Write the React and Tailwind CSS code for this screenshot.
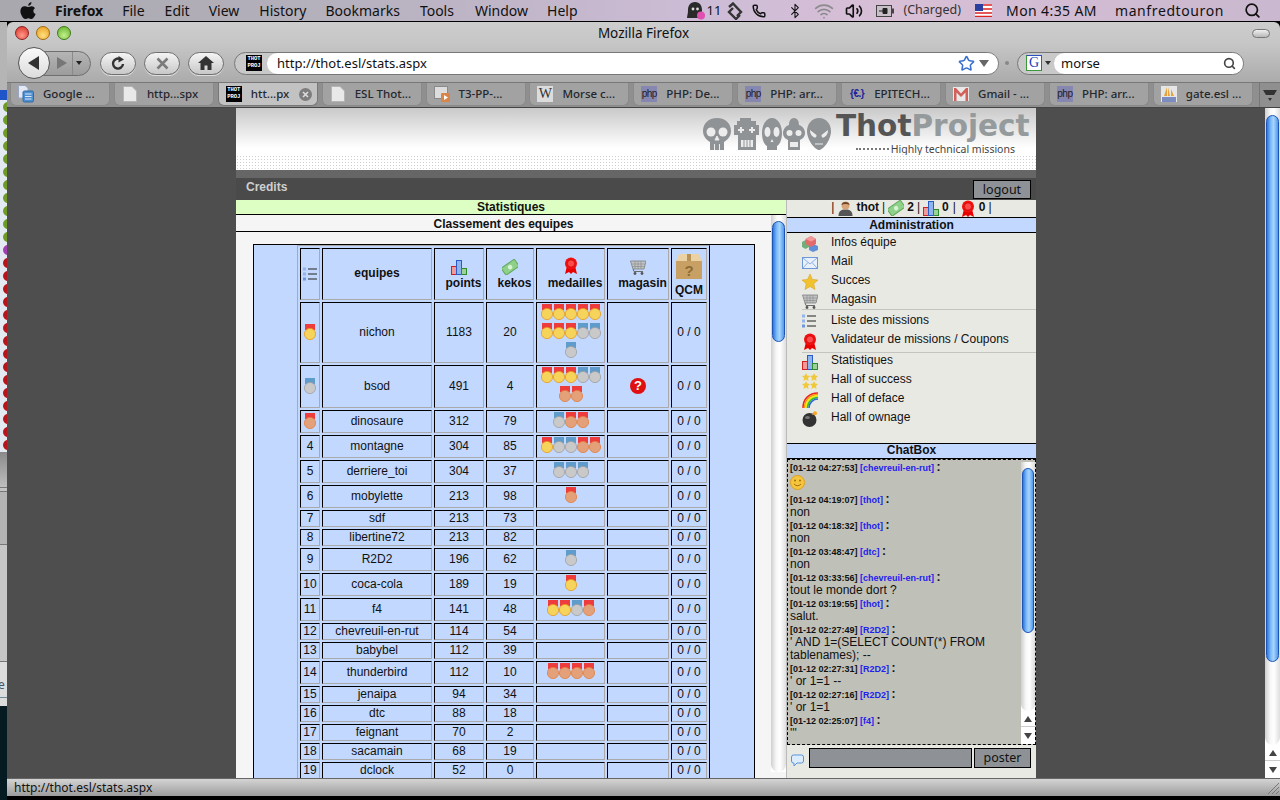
import React from 'react'
import { Phone, Bluetooth, Wifi, Volume2, Search, Star } from 'lucide-react'

const MENUS = [['File', 'ml-[19px]'], ['Edit', 'ml-[20px]'], ['View', 'ml-[19px]'], ['History', 'ml-[20px]'], ['Bookmarks', 'ml-[19px]'], ['Tools', 'ml-[20px]'], ['Window', 'ml-[21px]'], ['Help', 'ml-[19px]']]

const TABS = [
  ['docs', 'Google ...'], ['page', 'http...spx'], ['thot', 'htt...px', true], ['page', 'ESL Thot...'], ['t3', 'T3-PP-...'], ['wiki', 'Morse c...'],
  ['php', 'PHP: De...'], ['php', 'PHP: arr...'], ['epi', 'EPITECH...'], ['gmail', 'Gmail - ...'], ['php', 'PHP: arr...'], ['pma', 'gate.esl ...'],
]

// g = or, s = argent, b = bronze
const TEAMS = [
  { rank: 'g', name: 'nichon', points: 1183, kekos: 20, medals: 'ggggggggsss', h: 'h-[61px]' },
  { rank: 's', name: 'bsod', points: 491, kekos: 4, medals: 'gggssbb', h: 'h-[43px]', shop: true },
  { rank: 'b', name: 'dinosaure', points: 312, kekos: 79, medals: 'sbb', h: 'h-[23px]' },
  { rank: '4', name: 'montagne', points: 304, kekos: 85, medals: 'gssbb', h: 'h-[23px]' },
  { rank: '5', name: 'derriere_toi', points: 304, kekos: 37, medals: 'sss', h: 'h-[23px]' },
  { rank: '6', name: 'mobylette', points: 213, kekos: 98, medals: 'b', h: 'h-[23px]' },
  { rank: '7', name: 'sdf', points: 213, kekos: 73, medals: '', h: 'h-[17px]' },
  { rank: '8', name: 'libertine72', points: 213, kekos: 82, medals: '', h: 'h-[17px]' },
  { rank: '9', name: 'R2D2', points: 196, kekos: 62, medals: 's', h: 'h-[23px]' },
  { rank: '10', name: 'coca-cola', points: 189, kekos: 19, medals: 'g', h: 'h-[23px]' },
  { rank: '11', name: 'f4', points: 141, kekos: 48, medals: 'ggsb', h: 'h-[23px]' },
  { rank: '12', name: 'chevreuil-en-rut', points: 114, kekos: 54, medals: '', h: 'h-[17px]' },
  { rank: '13', name: 'babybel', points: 112, kekos: 39, medals: '', h: 'h-[17px]' },
  { rank: '14', name: 'thunderbird', points: 112, kekos: 10, medals: 'bbbb', h: 'h-[23px]' },
  { rank: '15', name: 'jenaipa', points: 94, kekos: 34, medals: '', h: 'h-[17px]' },
  { rank: '16', name: 'dtc', points: 88, kekos: 18, medals: '', h: 'h-[17px]' },
  { rank: '17', name: 'feignant', points: 70, kekos: 2, medals: '', h: 'h-[17px]' },
  { rank: '18', name: 'sacamain', points: 68, kekos: 19, medals: '', h: 'h-[17px]' },
  { rank: '19', name: 'dclock', points: 52, kekos: 0, medals: '', h: 'h-[17px]' },
]

const CHAT = [
  ['01-12 04:27:53', 'chevreuil-en-rut', null],
  ['01-12 04:19:07', 'thot', 'non'],
  ['01-12 04:18:32', 'thot', 'non'],
  ['01-12 03:48:47', 'dtc', 'non'],
  ['01-12 03:33:56', 'chevreuil-en-rut', 'tout le monde dort ?'],
  ['01-12 03:19:55', 'thot', 'salut.'],
  ['01-12 02:27:49', 'R2D2', "' AND 1=(SELECT COUNT(*) FROM tablenames); --"],
  ['01-12 02:27:31', 'R2D2', "' or 1=1 --"],
  ['01-12 02:27:16', 'R2D2', "' or 1=1"],
  ['01-12 02:25:07', 'f4', "'''"],
]

function Medal({ type }) {
  const ribbon = type === 's' ? '#5f9ccb' : '#ee3b3b'
  const fill = { g: '#f6d45c', s: '#c9c9c9', b: '#e4a078' }[type]
  const edge = { g: '#e79a1c', s: '#a0a0a0', b: '#e2803f' }[type]
  return (
    <svg width="12" height="16" viewBox="0 0 12 16" className="block shrink-0">
      <rect x="1" y="0" width="10" height="6" fill={ribbon} />
      <circle cx="6" cy="10" r="5.6" fill={fill} stroke={edge} strokeWidth="0.8" />
    </svg>
  )
}

function ChartIcon({ size = 16 }) {
  return (
    <svg width={size} height={size} viewBox="0 0 16 16" className="block shrink-0">
      <rect x="0.5" y="7.5" width="5" height="8" fill="#f29a9a" stroke="#d02020" />
      <rect x="5.5" y="1.5" width="5" height="14" fill="#8fb4ee" stroke="#2a5cc8" />
      <rect x="10.5" y="9.5" width="5" height="6" fill="#9ad29a" stroke="#2f8a2f" />
    </svg>
  )
}

function KekosIcon() {
  return (
    <svg width="16" height="16" viewBox="0 0 16 16" className="block shrink-0">
      <g transform="rotate(-35 8 8)">
        <rect x="0" y="4" width="16" height="8.5" fill="#8fd08a" stroke="#5ea85a" />
        <circle cx="8" cy="8.2" r="2.2" fill="#d8f2d4" />
      </g>
    </svg>
  )
}

function RibbonIcon() {
  return (
    <svg width="16" height="18" viewBox="0 0 16 18" className="block shrink-0">
      <path d="M4 9 L2 17 L6 15 L8 17 L10 15 L14 17 L12 9 Z" fill="#e80000" />
      <circle cx="8" cy="6.5" r="6" fill="#f01010" />
      <circle cx="8" cy="6.5" r="3.6" fill="#ff4a4a" stroke="#c00000" strokeWidth="0.6" />
    </svg>
  )
}

function CartIcon() {
  return (
    <svg width="16" height="16" viewBox="0 0 16 16" className="block shrink-0">
      <path d="M0.5 2 H16 L14 10 H3 Z" fill="#c2c4c4" stroke="#7b7f80" strokeWidth="0.8" />
      <path d="M2 5 H15 M2.5 7.5 H14.5 M5 2 V10 M8 2 V10 M11 2 V10" stroke="#858889" strokeWidth="0.6" />
      <path d="M3 10 L4 12.5 H13" stroke="#6a6d6e" fill="none" />
      <circle cx="5" cy="14.5" r="1.4" fill="#555" />
      <circle cx="12" cy="14.5" r="1.4" fill="#555" />
    </svg>
  )
}

function ListIcon() {
  return (
    <svg width="14" height="14" viewBox="0 0 14 14" className="block shrink-0">
      <rect x="0" y="0.5" width="3" height="3" fill="#93b4ea" />
      <rect x="0" y="5.5" width="3" height="3" fill="#93b4ea" />
      <rect x="0" y="10.5" width="3" height="3" fill="#6f98e0" />
      <path d="M5 2 H14 M5 7 H14 M5 12 H14" stroke="#222" strokeWidth="1" />
    </svg>
  )
}

function BoxIcon() {
  return (
    <svg width="28" height="30" viewBox="0 0 28 30" className="block shrink-0">
      <path d="M4 2 H24 L27 9 H1 Z" fill="#ead2a4" />
      <rect x="1" y="9" width="26" height="18" fill="#c8a063" />
      <rect x="12" y="2" width="4" height="7" fill="#b99355" />
      <text x="14" y="24" textAnchor="middle" fontSize="15" fontFamily="Liberation Sans" fontWeight="700" fill="#8d6c36">?</text>
    </svg>
  )
}

function MenuIcon({ kind }) {
  if (kind === 'cubes') return (
    <svg width="16" height="16" viewBox="0 0 16 16" className="block">
      <path d="M0 6 L3.5 4 L7 6 V11 L3.5 13 L0 11 Z" fill="#6fb07a" />
      <path d="M7 10 L11 8 L16 10 V14 L11 16 L7 14 Z" fill="#5f8fd6" />
      <path d="M3.5 3 L9 0 L14 3 V8 L9 11 L3.5 8 Z" fill="#e26a6a" />
      <path d="M3.5 3 L9 5.5 L14 3 L9 0 Z" fill="#f09a9a" />
    </svg>
  )
  if (kind === 'mail') return (
    <svg width="16" height="12" viewBox="0 0 16 12" className="block mt-[2px]">
      <rect x="0.5" y="0.5" width="15" height="11" fill="#e8f0fb" stroke="#6d98d8" />
      <path d="M1 1 L8 7 L15 1 M1 11 L6 5.5 M15 11 L10 5.5" stroke="#8fb0e0" fill="none" />
    </svg>
  )
  if (kind === 'star') return (
    <svg width="16" height="16" viewBox="0 0 16 16" className="block">
      <path d="M8 0 L10.4 5.4 L16 6 L11.8 9.8 L13 15.5 L8 12.6 L3 15.5 L4.2 9.8 L0 6 L5.6 5.4 Z" fill="#f2c22e" stroke="#d49a18" strokeWidth="0.5" />
    </svg>
  )
  if (kind === 'cart') return <CartIcon />
  if (kind === 'list') return <ListIcon />
  if (kind === 'ribbon') return <RibbonIcon />
  if (kind === 'chart') return <ChartIcon />
  if (kind === 'stars') return (
    <svg width="16" height="16" viewBox="0 0 16 16" className="block">
      <g fill="#f0c93a">
        <path d="M4 0 L5.2 2.6 L8 3 L6 5 L6.5 8 L4 6.5 L1.5 8 L2 5 L0 3 L2.8 2.6 Z" />
        <path d="M12 0 L13.2 2.6 L16 3 L14 5 L14.5 8 L12 6.5 L9.5 8 L10 5 L8 3 L10.8 2.6 Z" />
        <path d="M4 8 L5.2 10.6 L8 11 L6 13 L6.5 16 L4 14.5 L1.5 16 L2 13 L0 11 L2.8 10.6 Z" />
        <path d="M12 8 L13.2 10.6 L16 11 L14 13 L14.5 16 L12 14.5 L9.5 16 L10 13 L8 11 L10.8 10.6 Z" />
      </g>
    </svg>
  )
  if (kind === 'rainbow') return (
    <svg width="16" height="16" viewBox="0 0 16 16" className="block" fill="none" strokeWidth="1.5">
      <path d="M1 16 C1 7 7 1 16 1" stroke="#e22" />
      <path d="M2.5 16 C2.5 8 8 2.5 16 2.5" stroke="#f90" />
      <path d="M4 16 C4 9 9 4 16 4" stroke="#ee0" />
      <path d="M5.5 16 C5.5 10 10 5.5 16 5.5" stroke="#3b3" />
      <path d="M7 16 C7 11 11 7 16 7" stroke="#36d" />
    </svg>
  )
  return (
    <svg width="16" height="16" viewBox="0 0 16 16" className="block">
      <circle cx="7.5" cy="9" r="7" fill="#333" />
      <ellipse cx="5.5" cy="6.5" rx="2.5" ry="1.5" fill="#777" />
      <path d="M10 3.5 L13 1.5" stroke="#a86" strokeWidth="1.4" />
      <circle cx="13" cy="2.2" r="2" fill="#f6a623" />
    </svg>
  )
}

function Scrollbar({ w = 'w-[15px]', top, thumb, arrows = false, className = '' }) {
  return (
    <div className={`${w} ${className} shrink-0 flex flex-col overflow-hidden bg-white`}>
      <div className="flex-1 min-h-0 flex flex-col rounded-b-full bg-[linear-gradient(90deg,#cfcfcf,#f7f7f7_35%,#ffffff_60%,#dedede)]">
        <div className={top} />
        <div className={`${thumb} mx-[1px] rounded-full border border-[#1c54b8] bg-[linear-gradient(90deg,#2f77dc,#7fbcf8_35%,#a8d4fb_60%,#4e9aee)]`} />
      </div>
      {arrows && (
        <div className="h-[33px] shrink-0 flex flex-col bg-white">
          <div className="h-[16px] flex items-center justify-center border-b border-[#ccc]">
            <div className="w-0 h-0 border-x-[4px] border-x-transparent border-b-[6px] border-b-[#444]" />
          </div>
          <div className="flex-1 flex items-center justify-center">
            <div className="w-0 h-0 border-x-[4px] border-x-transparent border-t-[6px] border-t-[#444]" />
          </div>
        </div>
      )}
    </div>
  )
}

function Favicon({ kind }) {
  if (kind === 'thot') return (
    <div className="w-[16px] h-[16px] shrink-0 bg-black text-white text-[5.5px] leading-[7px] font-bold text-center font-['Liberation_Mono',monospace] tracking-[0px]">THOT<br />PROJ</div>
  )
  if (kind === 'page') return (
    <svg width="14" height="16" viewBox="0 0 14 16" className="shrink-0 ml-[1px] mr-[1px]">
      <path d="M0.5 0.5 H9 L13.5 5 V15.5 H0.5 Z" fill="#e9e9e9" stroke="#b5b5b5" />
    </svg>
  )
  if (kind === 'docs') return (
    <svg width="16" height="18" viewBox="0 0 16 18" className="shrink-0">
      <path d="M0.5 0.5 H7 L10 3 V13 H0.5 Z" fill="#e4e8f2" stroke="#9aa6c4" />
      <rect x="5" y="6" width="10.5" height="11" rx="1.5" fill="#4f8fd0" stroke="#2e6aa8" />
      <path d="M7 9 H13.5 M7 11.5 H13.5 M7 14 H13.5" stroke="#dbe9f7" />
    </svg>
  )
  if (kind === 't3') return (
    <svg width="16" height="16" viewBox="0 0 16 16" className="shrink-0">
      <rect x="0.5" y="0.5" width="13" height="12" fill="#ddd" stroke="#8a8a8a" />
      <rect x="7" y="7" width="9" height="9" rx="1" fill="#d9854a" />
      <path d="M10 9 L14 11.5 L10 14 Z" fill="#fff" />
    </svg>
  )
  if (kind === 'wiki') return (
    <div className="w-[16px] h-[16px] shrink-0 bg-[#dcdcdc] text-[#333] text-[14px] leading-[16px] text-center font-['Liberation_Serif',serif]">W</div>
  )
  if (kind === 'php') return (
    <div className="w-[16px] h-[16px] shrink-0 bg-[#8587b0] text-[#1d1d2a] text-[10px] leading-[16px] text-center font-['Liberation_Sans',sans-serif] tracking-[-0.5px]">php</div>
  )
  if (kind === 'epi') return (
    <div className="w-[16px] h-[16px] shrink-0 text-[#23239a] text-[10px] leading-[16px] font-bold text-center font-['Liberation_Sans',sans-serif] tracking-[-0.5px]">{'{€.}'}</div>
  )
  if (kind === 'gmail') return (
    <svg width="16" height="14" viewBox="0 0 16 14" className="shrink-0">
      <rect width="16" height="14" fill="#e8e8e8" />
      <path d="M1 14 V1 H3 L8 6.5 L13 1 H15 V14 H12.5 V5.5 L8 10 L3.5 5.5 V14 Z" fill="#d2605a" />
    </svg>
  )
  return (
    <svg width="16" height="16" viewBox="0 0 16 16" className="shrink-0">
      <rect width="16" height="16" fill="#e6e6e6" />
      <path d="M3 10 L6 1 V10 Z M7 10 V1 L9 10 Z M10 10 V3 L13 10 Z" fill="#e5a23a" />
      <rect x="1" y="11" width="14" height="5" fill="#7a8cc0" />
    </svg>
  )
}

function Skulls() {
  const f = '#8f9396'
  const h = '#ececec'
  return (
    <svg width="130" height="34" viewBox="0 0 130 34" className="block shrink-0">
      <path d="M15 1 C6 1 1 7 1 14 C1 20 5 23 8 25 V33 H22 V25 C25 23 29 20 29 14 C29 7 24 1 15 1 Z" fill={f} />
      <circle cx="9" cy="15" r="4.5" fill={h} /><circle cx="21" cy="15" r="4.5" fill={h} />
      <path d="M15 19 L13 23 H17 Z M12.5 27 V33 M17.5 27 V33" fill={h} stroke={h} />
      <path d="M38 1 H49 V4 H54 V8 H57 V18 H54 V33 H36 V18 H32 V8 H35 V4 H38 Z" fill={f} />
      <path d="M39 10 V16 M36 13 H42 M50 10 V16 M47 13 H53" stroke={h} strokeWidth="2" />
      <rect x="39" y="23" width="12" height="7" fill={h} /><path d="M42 23 V30 M45 23 V30 M48 23 V30" stroke={f} />
      <path d="M70 1 C64 1 60 8 60 16 C60 24 63 28 65 29 V33 H75 V29 C77 28 80 24 80 16 C80 8 76 1 70 1 Z" fill={f} />
      <ellipse cx="65.5" cy="15" rx="3" ry="5" fill={h} /><ellipse cx="74.5" cy="15" rx="3" ry="5" fill={h} />
      <path d="M70 22 L68.5 25 H71.5 Z" fill={h} />
      <path d="M92 1 C88 1 87 5 87 8 C83 9 81 13 81 16 C81 20 84 22 86 23 V33 H98 V23 C100 22 103 20 103 16 C103 13 101 9 97 8 C97 5 96 1 92 1 Z" fill={f} />
      <circle cx="87.5" cy="16" r="3" fill={h} /><circle cx="96.5" cy="16" r="3" fill={h} />
      <path d="M88 25 H96 V30 H88 Z" fill={h} />
      <path d="M117 1 C110 1 105 7 105 14 C105 23 113 33 117 33 C121 33 129 23 129 14 C129 7 124 1 117 1 Z" fill={f} />
      <path d="M108 13 L114.5 18 C114.5 21 113 21 111.5 20 C109 18.5 108 16 108 13 Z M126 13 L119.5 18 C119.5 21 121 21 122.5 20 C125 18.5 126 16 126 13 Z" fill={h} />
      <path d="M113 27 H121" stroke={h} />
    </svg>
  )
}

function MenuBar() {
  return (
    <div className="h-[22px] shrink-0 flex items-center border-b border-black bg-[linear-gradient(90deg,#a9a8ae,#b4b0bc_25%,#cdbcd6_55%,#d8bfd6_70%,#c9b8cf)] text-[14px] text-[#111] font-['Noto_Sans',sans-serif]">
      <svg width="16" height="18" viewBox="0 0 16 18" className="ml-[20px] mr-[19px] shrink-0">
        <path d="M11.5 0 C11.6 2 10 3.8 8.2 3.8 C8 2 9.6 0.3 11.5 0 Z M8 5 C9 5 10 4.2 11.6 4.2 C13 4.2 14.3 5 15 6.2 C12.6 7.6 13 11 15.6 12 C14.8 14.2 13.2 17 11.6 17 C10.4 17 10 16.2 8.4 16.2 C6.8 16.2 6.2 17 5.2 17 C3.2 17 0.4 12.6 0.4 9 C0.4 6 2.4 4.3 4.4 4.3 C5.8 4.3 7 5 8 5 Z" fill="#111" />
      </svg>
      <span className="font-bold">Firefox</span>
      {MENUS.map(([m, ml]) => <span key={m} className={ml}>{m}</span>)}
      <div className="ml-auto flex items-center h-full">
        <svg width="20" height="19" viewBox="0 0 20 19" className="shrink-0">
          <path d="M9 1 C4 1 2 5 2 9 C2 13 1 15 1 17 H15 C15 14 16 12 16 9 C16 5 14 1 9 1 Z" fill="#2a2a2a" />
          <circle cx="7" cy="8" r="1.4" fill="#ddd" /><circle cx="11.5" cy="8" r="1.4" fill="#ddd" />
          <circle cx="15" cy="14.5" r="4" fill="#e050b0" />
        </svg>
        <span className="text-[13px] ml-[1px]">11</span>
        <svg width="18" height="18" viewBox="0 0 18 18" className="ml-[5px] shrink-0" fill="none" stroke="#333" strokeWidth="2.4">
          <path d="M3 5 L7 1.5 L15 10 L11 14" /><path d="M7 6 L3 10 L10 17 L14 13" />
        </svg>
        <Phone size={14} className="ml-[8px] shrink-0" strokeWidth={2.5} />
        <Bluetooth size={16} className="ml-[21px] shrink-0" strokeWidth={1.6} />
        <Wifi size={20} className="ml-[11px] shrink-0 text-[#8d8a90]" strokeWidth={2} />
        <Volume2 size={18} className="ml-[11px] shrink-0" strokeWidth={2.2} />
        <svg width="18" height="12" viewBox="0 0 18 12" className="ml-[13px] shrink-0">
          <rect x="0.5" y="0.5" width="15" height="11" fill="#c8bfc9" stroke="#444" />
          <rect x="16" y="3.5" width="2" height="5" fill="#444" />
          <path d="M3 6 H7 M7 3.5 H11 V8.5 H7 Z" fill="#222" stroke="#222" />
        </svg>
        <span className="ml-[9px] text-[12.5px] text-[#333]">(Charged)</span>
        <svg width="17" height="13" viewBox="0 0 17 13" className="ml-[14px] shrink-0">
          <rect width="17" height="13" fill="#fff" />
          <path d="M0 1 H17 M0 5 H17 M0 9 H17 M0 12.5 H17" stroke="#d22" strokeWidth="1.4" />
          <rect width="8" height="7" fill="#2b3fa0" />
        </svg>
        <span className="ml-[14px] tracking-[0.4px]">Mon 4:35 AM</span>
        <span className="ml-[18px] tracking-[0.6px]">manfredtouron</span>
        <Search size={17} className="ml-[20px] mr-[19px] shrink-0" strokeWidth={2.4} />
      </div>
    </div>
  )
}

function ToolButton({ children }) {
  return (
    <div className="w-[36px] h-[23px] shrink-0 flex items-center justify-center rounded-full border border-[#6f6f6f] bg-[linear-gradient(180deg,#f4f4f4,#c8c8c8)] shadow-[0_1px_0_#ddd]">
      {children}
    </div>
  )
}

function Toolbar() {
  return (
    <div className="h-[38px] shrink-0 flex items-center pl-[11px] bg-[linear-gradient(180deg,#c6c6c6,#ababab)]">
      <div className="w-[32px] h-[32px] shrink-0 z-10 flex items-center justify-center rounded-full border border-[#555] bg-[linear-gradient(180deg,#fafafa,#dcdcdc)]">
        <div className="w-0 h-0 border-y-[7px] border-y-transparent border-r-[11px] border-r-[#333] mr-[2px]" />
      </div>
      <div className="w-[50px] h-[25px] shrink-0 -ml-[9px] flex items-center rounded-r-full border border-[#6f6f6f] bg-[linear-gradient(180deg,#b5b5b5,#9c9c9c)] pl-[15px]">
        <div className="w-0 h-0 border-y-[6px] border-y-transparent border-l-[10px] border-l-[#777]" />
        <div className="ml-[5px] h-full w-px bg-[#8a8a8a]" />
        <div className="ml-[3px] w-0 h-0 border-x-[3px] border-x-transparent border-t-[4px] border-t-[#222]" />
      </div>
      <div className="ml-[9px]"><ToolButton>
        <svg width="15" height="15" viewBox="0 0 15 15" fill="none"><path d="M12 8 A5 5 0 1 1 9 3" stroke="#333" strokeWidth="2.4" /><path d="M7.5 0 L13 3.5 L7.5 6.5 Z" fill="#333" /></svg>
      </ToolButton></div>
      <div className="ml-[8px]"><ToolButton>
        <svg width="13" height="13" viewBox="0 0 13 13"><path d="M1.5 1.5 L11.5 11.5 M11.5 1.5 L1.5 11.5" stroke="#7b7b7b" strokeWidth="2.6" /></svg>
      </ToolButton></div>
      <div className="ml-[8px]"><ToolButton>
        <svg width="16" height="14" viewBox="0 0 16 14"><path d="M8 0 L16 7 H13.5 V14 H9.5 V9.5 H6.5 V14 H2.5 V7 H0 Z" fill="#333" /></svg>
      </ToolButton></div>
      <div className="ml-[10px] w-[765px] h-[23px] shrink-0 flex items-center rounded-full border border-[#777] bg-[#c9c9c9] overflow-hidden">
        <div className="w-[32px] h-full shrink-0 flex items-center justify-end pr-[5px]"><Favicon kind="thot" /></div>
        <div className="flex-1 h-full flex items-center rounded-l-full bg-white pl-[10px] text-[13px] text-[#111]">
          <span className="pt-[1px]">http://thot.esl/stats.aspx</span>
          <Star size={17} className="ml-auto text-[#3a6fd0]" strokeWidth={2.2} />
          <div className="ml-[4px] mr-[9px] w-0 h-0 border-x-[5px] border-x-transparent border-t-[7px] border-t-[#666]" />
        </div>
      </div>
      <div className="ml-[6px] w-[4px] h-[4px] rounded-full bg-[#888] shrink-0" />
      <div className="ml-[8px] w-[227px] h-[23px] shrink-0 flex items-center rounded-full border border-[#777] bg-[#c9c9c9] overflow-hidden">
        <div className="w-[8px] shrink-0" />
        <div className="w-[16px] h-[16px] shrink-0 bg-white border border-[#3a9a3a] border-t-[#2a4fc0] border-r-[#c03030] text-[#1c3fb8] text-[14px] leading-[14px] text-center font-['Liberation_Serif',serif]">G</div>
        <div className="ml-[3px] w-0 h-0 shrink-0 border-x-[3px] border-x-transparent border-t-[4px] border-t-[#333]" />
        <div className="ml-[3px] flex-1 h-full flex items-center rounded-l-full bg-white pl-[7px] text-[13px] text-[#111]">
          <span className="pt-[1px]">morse</span>
          <Search size={13} className="ml-auto mr-[7px] text-[#444]" strokeWidth={3} />
        </div>
      </div>
    </div>
  )
}

function Tabs() {
  return (
    <div className="h-[26px] shrink-0 flex items-start pl-[3px] gap-[3.9px] border-t border-[#777] border-b border-b-[#444] bg-[#8f8f8f]">
      {TABS.map(([icon, label, active], i) => (
        <div key={i} className={`w-[100px] h-[23px] shrink-0 flex items-center pl-[7px] rounded-b-[6px] border-b border-x ${active ? 'bg-[#c2c2c2] border-[#777]' : 'bg-[#a2a2a2] border-[#8a8a8a]'}`}>
          <Favicon kind={icon} />
          <span className="ml-[9px] text-[11.5px] font-medium text-[#24272e] whitespace-nowrap">{label}</span>
          {active && (
            <div className="ml-auto mr-[5px] w-[13px] h-[13px] rounded-full bg-[#7d7d7d] flex items-center justify-center">
              <svg width="7" height="7" viewBox="0 0 7 7"><path d="M1 1 L6 6 M6 1 L1 6" stroke="#ddd" strokeWidth="1.6" /></svg>
            </div>
          )}
        </div>
      ))}
      <div className="ml-[2px] self-stretch w-[24px] flex items-center justify-center border-l border-[#777]">
        <svg width="16" height="13" viewBox="0 0 16 13"><path d="M1 1 H15 L12 6 H4 Z" fill="#333" /><path d="M6 9 H10 L8 12 Z" fill="#333" /></svg>
      </div>
    </div>
  )
}

function TeamTable() {
  const cell = 'p-0 pb-[1px] border border-t-black border-l-black border-r-[#aaa] border-b-[#aaa] text-center align-middle'
  const head = 'p-0 border border-t-black border-l-black border-r-[#aaa] border-b-[#aaa] text-center align-top'
  const top = 'p-0 pt-[1px] border border-t-black border-l-black border-r-[#aaa] border-b-[#aaa] text-center align-top'
  return (
    <table className="w-[413px] table-fixed border-separate border-spacing-[2px] border border-l-[#aaa] border-t-[#aaa] border-r-black border-b-black text-[12px] leading-[13px] text-[#111]">
      <thead>
        <tr className="h-[52px] font-bold">
          <th className={`${cell} w-[20px]`}><div className="flex justify-center"><ListIcon /></div></th>
          <th className={`${cell} w-[110px]`}>equipes</th>
          <th className={`${head} w-[50px]`}><div className="flex flex-col items-center gap-[2px] pt-[10px]"><ChartIcon /><span className="pl-[9px]">points</span></div></th>
          <th className={`${head} w-[48px]`}><div className="flex flex-col items-center gap-[2px] pt-[10px]"><KekosIcon /><span className="pl-[9px]">kekos</span></div></th>
          <th className={`${head} w-[69px]`}><div className="flex flex-col items-center gap-[2px] pt-[8px]"><RibbonIcon /><span className="pl-[9px]">medailles</span></div></th>
          <th className={`${head} w-[62px]`}><div className="flex flex-col items-center gap-[2px] pt-[10px]"><CartIcon /><span className="pl-[9px]">magasin</span></div></th>
          <th className={`${head} w-[36px]`}><div className="flex flex-col items-center gap-[2px] pt-[3px]"><BoxIcon /><span>QCM</span></div></th>
        </tr>
      </thead>
      <tbody>
        {TEAMS.map(t => (
          <tr key={t.name} className={t.h}>
            <td className={cell}>
              <div className="flex justify-center">
                {'gsb'.includes(t.rank) ? <Medal type={t.rank} /> : t.rank}
              </div>
            </td>
            <td className={cell}>{t.name}</td>
            <td className={cell}>{t.points}</td>
            <td className={cell}>{t.kekos}</td>
            <td className={top}>
              <div className="flex flex-wrap justify-center gap-y-[3px] w-[60px] mx-auto">
                {t.medals.split('').map((m, i) => <Medal key={i} type={m} />)}
              </div>
            </td>
            <td className={cell}>
              {t.shop && (
                <div className="mx-auto w-[16px] h-[16px] rounded-full bg-[#e01010] text-white text-[13px] leading-[16px] font-bold">?</div>
              )}
            </td>
            <td className={cell}>0 / 0</td>
          </tr>
        ))}
      </tbody>
    </table>
  )
}

function MenuItem({ kind, label }) {
  return (
    <div className="h-[19px] flex items-start pl-[15px] leading-[18px]">
      <div className="w-[16px] mt-[3px] shrink-0"><MenuIcon kind={kind} /></div>
      <span className="ml-[13px]">{label}</span>
    </div>
  )
}

function AdminMenu() {
  return (
    <div className="h-[210px] shrink-0 text-[12px] text-[#111]">
      <MenuItem kind="cubes" label="Infos équipe" />
      <MenuItem kind="mail" label="Mail" />
      <MenuItem kind="star" label="Succes" />
      <MenuItem kind="cart" label="Magasin" />
      <div className="ml-[15px] h-px bg-[#c4c4c0]" />
      <div className="pt-[1px]">
        <MenuItem kind="list" label="Liste des missions" />
        <MenuItem kind="ribbon" label="Validateur de missions / Coupons" />
      </div>
      <div className="mt-[3px] ml-[15px] h-px bg-[#c4c4c0]" />
      <div className="-mt-[2px]">
        <MenuItem kind="chart" label="Statistiques" />
        <MenuItem kind="stars" label="Hall of success" />
        <MenuItem kind="rainbow" label="Hall of deface" />
        <MenuItem kind="bomb" label="Hall of ownage" />
      </div>
    </div>
  )
}

function ChatBox() {
  return (
    <div className="h-[286px] shrink-0 flex border border-dashed border-black bg-[#bfc0b8]">
      <div className="flex-1 min-w-0 overflow-hidden pl-[2px] pr-[8px] pt-[1px] text-[12px] leading-[13px] text-[#111]">
        {CHAT.map(([stamp, nick, msg], i) => (
          <div key={i}>
            <div className="h-[13px] text-[9px] font-bold whitespace-nowrap">
              [{stamp}] <span className="text-[#2222ee]">[{nick}]</span> <span className="text-[12px]">:</span>
            </div>
            {msg ? <div>{msg}</div> : (
              <div className="h-[19px] pt-[1px]">
                <svg width="15" height="15" viewBox="0 0 15 15">
                  <circle cx="7.5" cy="7.5" r="7" fill="#f4c63c" stroke="#e0a020" />
                  <circle cx="5" cy="5.5" r="1" fill="#a86a10" /><circle cx="10" cy="5.5" r="1" fill="#a86a10" />
                  <path d="M4 9 Q7.5 12.5 11 9" stroke="#a86a10" fill="none" />
                </svg>
              </div>
            )}
          </div>
        ))}
      </div>
      <Scrollbar w="w-[14px]" top="h-[6px]" thumb="h-[165px]" arrows className="mt-[2px] mb-0" />
    </div>
  )
}

function UserIcon() {
  return (
    <svg width="15" height="16" viewBox="0 0 15 16" className="block shrink-0">
      <path d="M0.5 16 C0.5 11 3 9.5 7.5 9.5 C12 9.5 14.5 11 14.5 16 Z" fill="#555" />
      <circle cx="7.5" cy="5.5" r="4" fill="#d9a679" />
      <path d="M3.5 5 C3.5 1 11.5 1 11.5 5 C9 3.5 6 3.5 3.5 5 Z" fill="#6b4526" />
    </svg>
  )
}

function Sidebar() {
  return (
    <div className="w-[250px] shrink-0 flex flex-col border-l border-[#bbb] bg-[#e9e9e3] overflow-hidden">
      <div className="h-[17px] shrink-0 flex items-start justify-center text-[12px] leading-[14px] font-bold text-[#111]">
        <span className="font-normal mr-[4px]">|</span><UserIcon /><span className="ml-[3px]">thot</span>
        <span className="font-normal mx-[3px]">|</span><KekosIcon /><span className="ml-[3px]">2</span>
        <span className="font-normal mx-[3px]">|</span><ChartIcon /><span className="ml-[3px]">0</span>
        <span className="font-normal mx-[4px]">|</span><RibbonIcon /><span className="ml-[3px]">0</span>
        <span className="font-normal ml-[3px]">|</span>
      </div>
      <div className="h-[16px] shrink-0 border-y border-black bg-[#c2d8ff] text-center text-[12px] leading-[14px] font-bold text-[#111]">Administration</div>
      <AdminMenu />
      <div className="h-[16px] shrink-0 border-y border-black bg-[#c2d8ff] text-center text-[12px] leading-[12px] font-bold text-[#111]">ChatBox</div>
      <ChatBox />
      <div className="h-[26px] shrink-0 flex items-center pl-[4px]">
        <svg width="13" height="13" viewBox="0 0 13 13" className="shrink-0 mt-[5px]">
          <path d="M2.5 1 H10.5 Q12.5 1 12.5 3 V7 Q12.5 9 10.5 9 H6 L3 12 V9 H2.5 Q0.5 9 0.5 7 V3 Q0.5 1 2.5 1 Z" fill="#dcecff" stroke="#5b93d8" />
        </svg>
        <div className="ml-[5px] w-[163px] h-[20px] shrink-0 border border-black bg-[#8e9296]" />
        <div className="ml-[2px] w-[57px] h-[20px] shrink-0 border border-black bg-[#8e9296] text-center text-[12.5px] leading-[18px] text-[#111] font-['Noto_Sans',sans-serif]">poster</div>
      </div>
    </div>
  )
}

function ThotPage() {
  return (
    <div className="w-[800px] h-[670px] shrink-0 flex flex-col overflow-hidden font-['Liberation_Sans',sans-serif]">
      <div className="h-[47px] shrink-0 flex justify-end items-start pr-[6px] bg-[linear-gradient(180deg,#c9c9c9,#ffffff_85%)]">
        <div className="mt-[9px] mr-[4px]"><Skulls /></div>
        <div className="w-[194px] shrink-0 flex flex-col">
          <div className="h-[33px] mt-[2px] text-[29.5px] leading-[33px] font-bold whitespace-nowrap font-['DejaVu_Sans',sans-serif]">
            <span className="text-[#555]">Thot</span><span className="text-[#959a9c]">Project</span>
          </div>
          <div className="flex items-center justify-end pr-[15px] text-[10.5px] leading-[12px] text-[#444] font-['Noto_Sans',sans-serif] whitespace-nowrap">
            <span className="w-[33px] mr-[2px] border-t-2 border-dotted border-[#777]" />Highly technical missions
          </div>
        </div>
      </div>
      <div className="h-[15px] shrink-0 bg-white bg-[radial-gradient(#d0d0d0_1px,transparent_1px)] bg-[length:3px_3px]" />
      <div className="h-[8px] shrink-0 bg-[#666]" />
      <div className="h-[22px] shrink-0 flex items-center justify-between pl-[10px] pr-[5px] bg-[#4a4a4a]">
        <span className="-mt-[4px] text-[12px] font-bold text-[#cfcfcf]">Credits</span>
        <div className="w-[58px] h-[19px] border border-black bg-[#8e9296] text-center text-[12.5px] leading-[17px] text-[#111] font-['Noto_Sans',sans-serif]">logout</div>
      </div>
      <div className="flex-1 min-h-0 flex">
        <div className="w-[550px] shrink-0 flex flex-col bg-[#f5f5f5]">
          <div className="h-[15px] shrink-0 border-b border-black bg-[#ddffc4] text-center text-[12px] leading-[14px] font-bold text-[#111]">Statistiques</div>
          <div className="flex-1 min-h-0 flex">
            <div className="flex-1 min-w-0 overflow-hidden">
              <div className="h-[17px] border-b border-black text-center text-[12px] leading-[18px] font-bold text-[#111]">Classement des equipes</div>
              <div className="mt-[12px] ml-[17px] w-[502px] pl-[43px] border border-black bg-[#c2d8ff]">
                <TeamTable />
              </div>
            </div>
            <Scrollbar top="h-[6px]" thumb="h-[121px]" className="mb-[6px]" />
          </div>
        </div>
        <Sidebar />
      </div>
    </div>
  )
}

function BackWindowStrip() {
  return (
    <div className="w-[7px] h-[778px] shrink-0 flex flex-col overflow-hidden bg-[#bdbdbd]">
      <div className="h-[68px] shrink-0 bg-[#b5b5b5]" />
      <div className="h-[10px] shrink-0 bg-[#1f55c8]" />
      <div className="h-[352px] shrink-0 flex flex-col gap-[3px] pt-[2px] bg-[#e4eaf2] overflow-hidden">
        {Array.from({ length: 27 }).map((_, i) => (
          <div key={i} className={`w-[10px] h-[10px] shrink-0 ml-[3px] rounded-full ${i < 11 ? 'bg-[#6f9a2a]' : i === 11 ? 'bg-[#a23fb0]' : 'bg-[#b8141c]'}`} />
        ))}
      </div>
      <div className="h-[36px] shrink-0 border-b border-[#777] bg-[linear-gradient(180deg,#8a8a8a,#bdbdbd)]" />
      <div className="h-[4px] shrink-0 border-b border-[#777] bg-[#c2c2c2]" />
      <div className="h-[53px] shrink-0 border-b border-[#777] bg-[#b4b4b4]" />
      <div className="h-[117px] shrink-0 border-b border-[#777] bg-[#c6c6c6]" />
      <div className="h-[36px] shrink-0 border-b border-[#6f8a9a] bg-[#dcdcdc] text-[12px] text-[#456] leading-[46px] -indent-[2px]">e</div>
      <div className="h-[8px] shrink-0 bg-[#dcdcdc]" />
      <div className="flex-1 bg-[#061a22]" />
    </div>
  )
}

export default function App() {
  return (
    <div className="w-[1280px] h-[800px] flex flex-col overflow-hidden bg-black font-['Noto_Sans',sans-serif]">
      <MenuBar />
      <div className="flex-1 min-h-0 flex items-start">
        <BackWindowStrip />
        <div className="flex-1 min-w-0 h-[774px] flex flex-col rounded-t-[6px] overflow-hidden">
          <div className="h-[22px] shrink-0 flex items-center bg-[linear-gradient(180deg,#cdcdcd,#c6c6c6)] text-[13.5px] text-[#111]">
            <div className="w-[100px] flex gap-[7px] pl-[8px]">
              <div className="w-[14px] h-[14px] rounded-full border border-[#8a2020] bg-[radial-gradient(circle_at_50%_70%,#ff9a8a,#d62b20)]" />
              <div className="w-[14px] h-[14px] rounded-full border border-[#a06a10] bg-[radial-gradient(circle_at_50%_70%,#ffdf80,#e89a18)]" />
              <div className="w-[14px] h-[14px] rounded-full border border-[#3f7a18] bg-[radial-gradient(circle_at_50%_70%,#c4f08a,#5cae28)]" />
            </div>
            <span className="flex-1 text-center pt-[1px]">Mozilla Firefox</span>
            <div className="w-[100px] flex justify-end pr-[10px]">
              <div className="w-[18px] h-[9px] rounded-full border border-[#777] bg-[linear-gradient(180deg,#f0f0f0,#b8b8b8)]" />
            </div>
          </div>
          <Toolbar />
          <Tabs />
          <div className="flex-1 min-h-0 flex bg-[#4e4e4e]">
            <div className="flex-1 min-w-0 flex justify-center overflow-hidden">
              <ThotPage />
            </div>
            <Scrollbar top="h-[7px]" thumb="h-[547px]" arrows />
          </div>
          <div className="h-[18px] shrink-0 flex items-center justify-between pl-[7px] pr-[1px] bg-[linear-gradient(180deg,#d4d4d4,#9c9c9c)] text-[12px] text-[#111] border-t border-[#666]">
            http://thot.esl/stats.aspx
            <svg width="12" height="12" viewBox="0 0 12 12"><path d="M1 12 L12 1 M5 12 L12 5 M9 12 L12 9" stroke="#777" /></svg>
          </div>
        </div>
      </div>
    </div>
  )
}
